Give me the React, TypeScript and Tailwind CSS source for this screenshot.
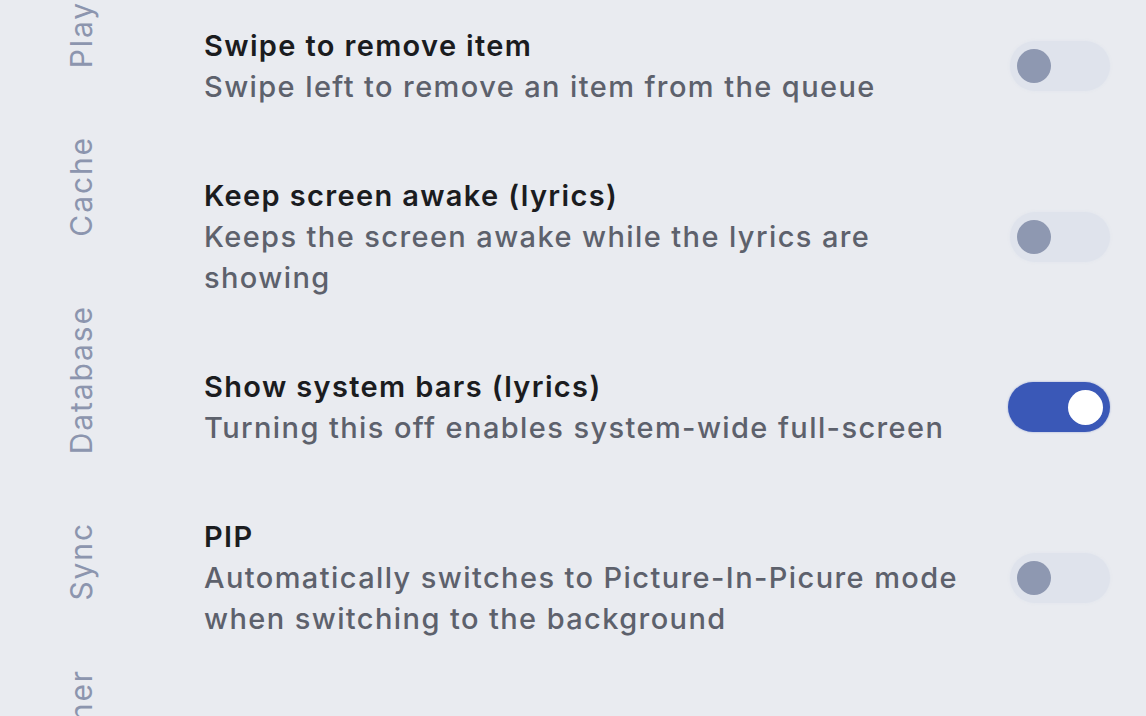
import React from "react";

type Row = { title: string; lines: string[]; on: boolean };

const rows: Row[] = [
  { title: "Swipe to remove item", lines: ["Swipe left to remove an item from the queue"], on: false },
  { title: "Keep screen awake (lyrics)", lines: ["Keeps the screen awake while the lyrics are", "showing"], on: false },
  { title: "Show system bars (lyrics)", lines: ["Turning this off enables system-wide full-screen"], on: true },
  { title: "PIP", lines: ["Automatically switches to Picture-In-Picure mode", "when switching to the background"], on: false },
];

const tabs = ["Player", "Cache", "Database", "Sync", "Other"];

function Toggle({ on }: { on: boolean }) {
  return on ? (
    <div className="flex h-[50px] w-[102px] shrink-0 items-center justify-end rounded-full bg-[#3a58b7] pr-[7px] shadow-[0_0_2px_rgba(58,88,183,0.5)]">
      <div className="h-[35px] w-[35px] rounded-full bg-white" />
    </div>
  ) : (
    <div className="flex h-[50px] w-[100px] shrink-0 items-center rounded-full bg-[#dfe3ec] pl-[7px] shadow-[0_0_3px_rgba(223,227,236,0.9)]">
      <div className="h-[34px] w-[34px] rounded-full bg-[#8e98b1]" />
    </div>
  );
}

export default function App() {
  return (
    <div
      className="flex h-[716px] w-[1146px] overflow-hidden bg-[#e9ebf0]"
      style={{ fontFamily: "Inter, 'Noto Sans', sans-serif" }}
    >
      <div className="flex w-[204px] shrink-0 flex-col gap-[68px] pl-[66px] -mt-[31px]">
        {tabs.map((t) => (
          <span
            key={t}
            className="rotate-180 text-[30px] leading-[30px] font-normal tracking-[1.9px] text-[#8c95ae] [writing-mode:vertical-rl]"
          >
            {t}
          </span>
        ))}
      </div>
      <div className="flex flex-1 flex-col gap-[68px] pt-[25px] pr-[36px]">
        {rows.map((r) => (
          <div key={r.title} className="flex items-center justify-between">
            <div className="flex flex-col">
              <div className="text-[29px] leading-[41px] font-semibold tracking-[1.35px] text-[#1b1c1f]">{r.title}</div>
              {r.lines.map((l) => (
                <div key={l} className="text-[29px] leading-[41px] font-medium tracking-[1.4px] text-[#5d616c]">
                  {l}
                </div>
              ))}
            </div>
            <Toggle on={r.on} />
          </div>
        ))}
      </div>
    </div>
  );
}
